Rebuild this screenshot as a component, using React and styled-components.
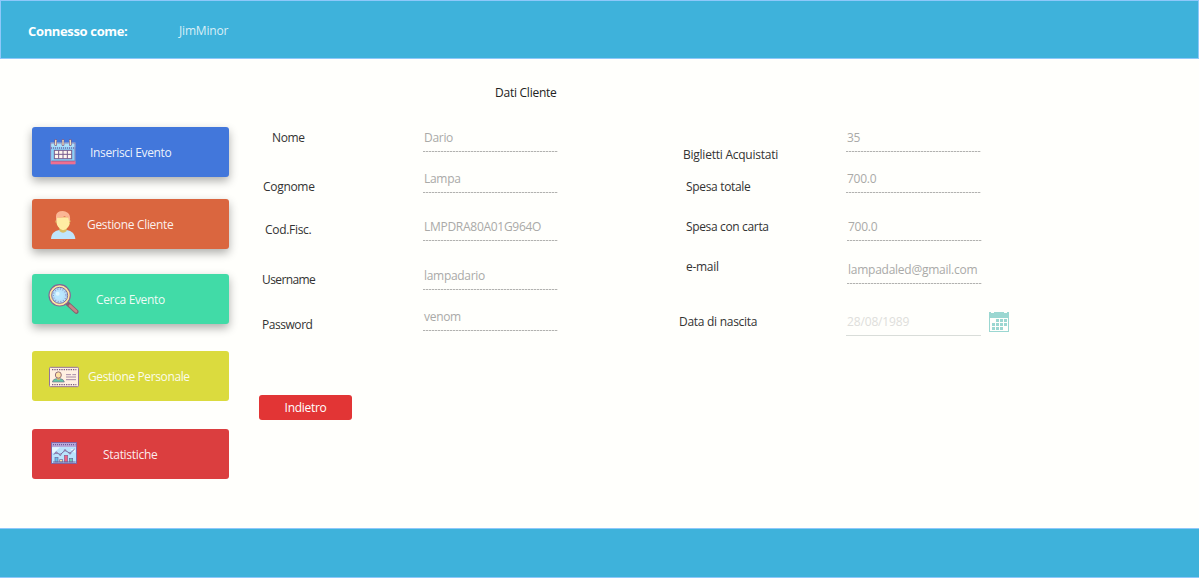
import React from "react";
import styled, { createGlobalStyle } from "styled-components";

const Global = createGlobalStyle`
  * { box-sizing: border-box; }
  body { margin: 0; background: #fffffc; font-family: "Open Sans", "Noto Sans", sans-serif; font-size: 12px; color: #333; }
`;

const Page = styled.div`
  width: 1199px;
  height: 578px;
  display: flex;
  flex-direction: column;
  overflow: hidden;
`;

const Header = styled.header`
  height: 59px;
  flex: none;
  display: flex;
  align-items: center;
  padding: 3px 27px 0;
  background: #3eb2db;
  border: 1px solid #8ec8fa;
  color: #fff;
`;

const Footer = styled.footer`
  height: 50px;
  flex: none;
  background: #3eb2db;
  border: solid #8ec8fa;
  border-width: 1px 0;
`;

const Text = styled.span`
  display: block;
  flex: none;
  white-space: nowrap;
  line-height: 16px;
  letter-spacing: ${(p) => p.$ls || 0}px;
`;

const Caption = styled(Text)`
  width: 151px;
  font-size: 13px;
  font-weight: 700;
`;

const User = styled(Text)`
  color: #d9eef7;
`;

const Main = styled.main`
  flex: 1;
  display: flex;
  padding-left: 32px;
`;

const Sidebar = styled.nav`
  width: 197px;
  padding-top: 68px;
  flex: none;
`;

const MenuButton = styled.button`
  display: flex;
  align-items: flex-start;
  width: 197px;
  height: 50px;
  margin: 0 0 ${(p) => p.$after || 0}px;
  padding: 0;
  border: 0;
  border-radius: 3px;
  background: ${(p) => p.$color};
  color: #fff;
  font: inherit;
  text-align: left;
  box-shadow: ${(p) => (p.$raised ? "0 4px 10px rgba(0,0,0,.32)" : "none")};
`;

const IconSlot = styled.span`
  flex: none;
  display: block;
  width: ${(p) => p.$w}px;
  padding: ${(p) => p.$top}px 0 0 ${(p) => p.$left}px;
  svg { display: block; }
`;

const MenuText = styled(Text)`
  margin-top: 18px;
  color: rgba(255, 255, 255, 0.92);
`;

const Content = styled.section`
  margin-left: 32px;
  padding-top: 26px;
`;

const Title = styled(Text)`
  margin-left: 234px;
  color: #222;
`;

const Columns = styled.div`
  display: flex;
  height: 294px;
`;

const Column = styled.div`
  width: ${(p) => p.$w}px;
  padding-top: 26px;
  flex: none;
`;

const Label = styled(Text)`
  margin: ${(p) => p.$gap}px 0 0 ${(p) => p.$indent}px;
`;

const Field = styled.div`
  width: 135px;
  height: 25px;
  margin: ${(p) => p.$gap}px 0 0 ${(p) => p.$indent || 0}px;
  padding: 3px 0 0 1px;
  color: ${(p) => (p.$faded ? "#dededb" : "#aaaaa8")};
  background: ${(p) =>
    p.$faded
      ? "linear-gradient(#d9ddd9, #d9ddd9)"
      : "repeating-linear-gradient(90deg, #b2b2b0 0 2px, #e6e6e3 2px 3px)"}
    left bottom / 100% 1px no-repeat;
`;

const DateRow = styled.div`
  display: flex;
  width: 163px;
  margin-top: 27px;
  justify-content: space-between;
  svg { display: block; }
`;

const BackButton = styled.button`
  display: flex;
  align-items: center;
  justify-content: center;
  width: 93px;
  height: 25px;
  margin: 0 0 0 -2px;
  padding: 0;
  border: 0;
  border-radius: 3px;
  background: #e23535;
  color: #fff;
  font: inherit;
`;

const CalendarIcon = () => (
  <svg width="26" height="26" viewBox="90 72 78 78">
    <rect x="92" y="83" width="74" height="64" fill="#8bd0f7" />
    <rect x="92" y="83" width="74" height="14" fill="#a9e0fb" />
    <path d="M92 84v63M165 84v63M92 84h10M112 84h12M134 84h12M156 84h10" stroke="#8d70a8" strokeWidth="2.5" fill="none" />
    <path d="M93 99h72" stroke="#7569a6" strokeWidth="4" strokeDasharray="3 3" />
    <rect x="93" y="138" width="73" height="10" fill="#ef6f91" />
    <path d="M95 138h69" stroke="#75538d" strokeWidth="2" />
    <rect x="103" y="106" width="52" height="25" fill="#fff6ee" stroke="#765c8d" strokeWidth="3" />
    <path d="M116 106v25M129 106v25M142 106v25M103 118h52" stroke="#765c8d" strokeWidth="3" />
    {[107, 129, 151].map((x) => (
      <path key={x} d={`M${x} 76v13`} stroke="#765c8d" strokeWidth="8" strokeLinecap="round" />
    ))}
    {[107, 129, 151].map((x) => (
      <path key={x} d={`M${x} 76v13`} stroke="#f2dfb9" strokeWidth="4" strokeLinecap="round" />
    ))}
  </svg>
);

const PersonIcon = () => (
  <svg width="26" height="30" viewBox="90 60 78 90">
    <path d="M93 147c1-16 9-24 25-27h22c16 3 24 11 26 27z" fill="#bfe5fc" />
    <path d="M118 112h22v11q-11 11-22 0z" fill="#d9bd62" />
    <path d="M109 82h40l1 14q-2 20-21 25-18-7-20-25z" fill="#ffeca3" />
    <path d="M108 93V78q1-11 12-14 13-4 23 4 9 6 7 25h-3l-3-13q-6 3-10-1-12 7-22 2l-2 12z" fill="#fbb694" />
    <path d="M107 92l2 7M151 92l-3 7" stroke="#dfbe68" strokeWidth="3" />
  </svg>
);

const SearchIcon = () => (
  <svg width="32" height="32" viewBox="81 54 96 96">
    <path d="M142 115l27 25" stroke="#84606e" strokeWidth="13" strokeLinecap="round" />
    <path d="M150 122l18 17" stroke="#c58486" strokeWidth="8" strokeLinecap="round" />
    <circle cx="119" cy="91" r="32" fill="#ffe5a0" stroke="#846495" strokeWidth="3.5" />
    <circle cx="119" cy="91" r="24" fill="#b7e2fb" stroke="#7b6c9f" strokeWidth="3" />
    <circle cx="119" cy="91" r="19" fill="none" stroke="#8d9cc9" strokeWidth="4" strokeDasharray="3 5" />
    <circle cx="117" cy="91" r="13" fill="#b9e7ff" />
    <circle cx="113" cy="86" r="6" fill="#dff7ff" />
  </svg>
);

const BadgeIcon = () => (
  <svg width="30" height="22" viewBox="87 72 90 66">
    <rect x="88.500" y="76" width="87" height="58" rx="3" fill="#fff0e2" stroke="#94749a" strokeWidth="3" />
    <path d="M96 83h73M96 128h73" stroke="#7d5e80" strokeWidth="4" strokeDasharray="4 3" />
    <path d="M97 120q2-9 12-10h12q10 1 12 10z" fill="#61c9a7" stroke="#71718b" strokeWidth="2" />
    <path d="M111 105h9v8h-9z" fill="#e4b967" />
    <ellipse cx="115" cy="99" rx="9" ry="9.5" fill="#ffe1a4" stroke="#936d7c" strokeWidth="3" />
    <path d="M138 98h15M157 98h11M138 105h30M138 113h30" stroke="#94749a" strokeWidth="2.5" />
  </svg>
);

const StatsIcon = () => (
  <svg width="26" height="23" viewBox="93 63 78 69">
    <rect x="94.500" y="67.500" width="75" height="63" fill="#b9e3fc" stroke="#8065a4" strokeWidth="3" />
    <rect x="96" y="69" width="72" height="12" fill="#b6a9da" />
    <path d="M99 74h67" stroke="#705a9b" strokeWidth="4" strokeDasharray="3 3" />
    <path d="M96 82h24l-18 16h-6zM151 87h15v13z" fill="#e5f8ff" />
    <path d="M101 103l8-5 12 6 14-13 15 9 14-13" fill="none" stroke="#76679e" strokeWidth="3" />
    {[[109, 98], [121, 104], [135, 91], [150, 100]].map(([x, y]) => (
      <circle key={x} cx={x} cy={y} r="2.500" fill="#c9a0c0" stroke="#76679e" strokeWidth="2" />
    ))}
    <rect x="105" y="112" width="9" height="14" fill="#65bee9" stroke="#6d659d" strokeWidth="2" />
    <rect x="119" y="119" width="9" height="7" fill="#ffe29a" stroke="#6d659d" strokeWidth="2" />
    <rect x="133" y="106" width="10" height="20" fill="#ed6684" stroke="#8a5b91" strokeWidth="2" />
    <rect x="148" y="115" width="10" height="11" fill="#6fcab6" stroke="#6d659d" strokeWidth="2" />
    <path d="M99 126h68" stroke="#6d659d" strokeWidth="3" />
  </svg>
);

const dateCells = [
  [7, 8], [11, 8], [15, 8],
  [3, 12], [7, 12], [11, 12], [15, 12],
  [3, 16], [7, 16], [11, 16],
];

const DateIcon = () => (
  <svg width="20" height="21" viewBox="0 0 20 21" shapeRendering="crispEdges">
    <path d="M0 1h2v1h3V1h10v1h3V1h2v20H0z" fill="#9bd7d1" />
    <rect x="1" y="7" width="18" height="13" fill="#fffffc" />
    {dateCells.map(([x, y]) => (
      <rect key={`${x}-${y}`} x={x} y={y} width="3" height="3" fill="#9bd7d1" />
    ))}
  </svg>
);

const menu = [
  { text: "Inserisci Evento", color: "#4277db", after: 22, raised: true, Icon: CalendarIcon, left: 18, top: 12, w: 58, ls: -0.35 },
  { text: "Gestione Cliente", color: "#da663f", after: 25, raised: true, Icon: PersonIcon, left: 18, top: 11, w: 55, ls: -0.33 },
  { text: "Cerca Evento", color: "#41dba7", after: 27, raised: true, Icon: SearchIcon, left: 15, top: 9, w: 64, ls: -0.35 },
  { text: "Gestione Personale", color: "#dbdb3e", after: 28, Icon: BadgeIcon, left: 17, top: 15, w: 56, ls: -0.38 },
  { text: "Statistiche", color: "#db3e3f", Icon: StatsIcon, left: 19, top: 12, w: 71, ls: -0.3 },
];

const leftLabels = [
  ["Nome", 3, 11, -0.35],
  ["Cognome", 33, 2, -0.3],
  ["Cod.Fisc.", 27, 4, -0.3],
  ["Username", 34, 1, -0.6],
  ["Password", 29, 1, -0.45],
];

const leftFields = [
  ["Dario", 0, -0.3],
  ["Lampa", 16, -0.3],
  ["LMPDRA80A01G964O", 23, -0.28],
  ["lampadario", 24, -0.3],
  ["venom", 16, -0.3],
];

const rightLabels = [
  ["Biglietti Acquistati", 20, 4, -0.24],
  ["Spesa totale", 16, 7, -0.33],
  ["Spesa con carta", 24, 7, -0.35],
  ["e-mail", 24, 7, -0.28],
  ["Data di nascita", 39, 0, -0.28],
];

const rightFields = [
  ["35", 0, 0, -0.3],
  ["700.0", 16, 0, -0.25],
  ["700.0", 23, 1, -0.25],
  ["lampadaled@gmail.com", 18, 1, -0.25],
];

export default function App() {
  return (
    <Page>
      <Global />
      <Header>
        <Caption $ls={-0.35}>Connesso come:</Caption>
        <User $ls={-0.18}>JimMinor</User>
      </Header>
      <Main>
        <Sidebar>
          {menu.map(({ text, color, after, raised, Icon, left, top, w, ls }) => (
            <MenuButton key={text} $color={color} $after={after} $raised={raised}>
              <IconSlot $w={w} $left={left} $top={top}>
                <Icon />
              </IconSlot>
              <MenuText $ls={ls}>{text}</MenuText>
            </MenuButton>
          ))}
        </Sidebar>
        <Content>
          <Title $ls={-0.25}>Dati Cliente</Title>
          <Columns>
            <Column $w={162}>
              {leftLabels.map(([t, gap, indent, ls]) => (
                <Label key={t} $gap={gap} $indent={indent} $ls={ls}>{t}</Label>
              ))}
            </Column>
            <Column $w={256}>
              {leftFields.map(([t, gap, ls]) => (
                <Field key={t} $gap={gap}><Text $ls={ls}>{t}</Text></Field>
              ))}
            </Column>
            <Column $w={167}>
              {rightLabels.map(([t, gap, indent, ls]) => (
                <Label key={t} $gap={gap} $indent={indent} $ls={ls}>{t}</Label>
              ))}
            </Column>
            <Column $w={170}>
              {rightFields.map(([t, gap, indent, ls], i) => (
                <Field key={i} $gap={gap} $indent={indent}><Text $ls={ls}>{t}</Text></Field>
              ))}
              <DateRow>
                <Field $gap={0} $faded><Text $ls={-0.15}>28/08/1989</Text></Field>
                <DateIcon />
              </DateRow>
            </Column>
          </Columns>
          <BackButton><Text $ls={-0.3}>Indietro</Text></BackButton>
        </Content>
      </Main>
      <Footer />
    </Page>
  );
}
